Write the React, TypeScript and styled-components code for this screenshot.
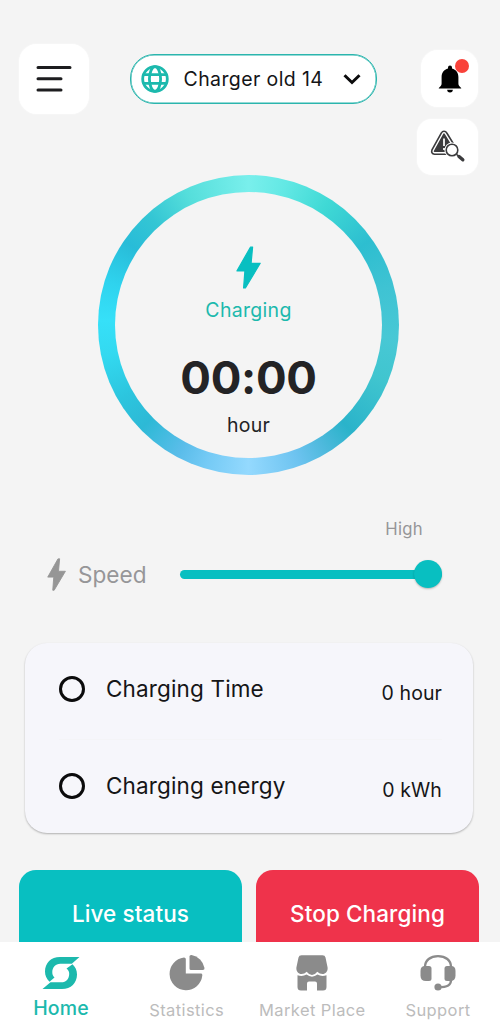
import React from "react";
import styled, { createGlobalStyle } from "styled-components";

const teal = "#08bfc1";
const tealText = "#1cb9ad";

const GlobalStyle = createGlobalStyle`
  * { box-sizing: border-box; }
  body { margin: 0; background: #f4f4f4; font-family: Inter, "Liberation Sans", sans-serif; }
  button { font: inherit; border: 0; padding: 0; cursor: pointer; }
`;

const Screen = styled.div`
  width: 500px;
  height: 1024px;
  overflow: hidden;
  display: flex;
  flex-direction: column;
  background: #f4f4f4;
`;

const Header = styled.header`
  flex: none;
  height: 175px;
  display: flex;
  justify-content: space-between;
  align-items: flex-start;
  padding: 44px 22px 0 19px;
`;

const Tile = styled.button<{ $w: number; $h: number; $r: number }>`
  position: relative;
  width: ${(p) => p.$w}px;
  height: ${(p) => p.$h}px;
  border-radius: ${(p) => p.$r}px;
  background: #fff;
  box-shadow: 0 0 2px rgba(255, 255, 255, 0.9);
  display: flex;
  align-items: center;
  justify-content: center;
`;

const DiagnosticsTile = styled(Tile)`
  padding-bottom: 3px;
`;

const Picker = styled.button`
  width: 247px;
  height: 50px;
  margin: 10px 0 0;
  padding: 0 15px 0 10px;
  border: 1px solid #2bb5ad;
  box-shadow: inset 0 0 0 0.5px #2bb5ad;
  border-radius: 24px;
  background: #fff;
  display: flex;
  align-items: center;
`;

const Label = styled.span<{
  $size: number;
  $line?: number;
  $color?: string;
  $weight?: number;
  $track?: number;
}>`
  font-size: ${(p) => p.$size}px;
  line-height: ${(p) => p.$line ?? 24}px;
  color: ${(p) => p.$color ?? "#151517"};
  font-weight: ${(p) => p.$weight ?? 400};
  letter-spacing: ${(p) => p.$track ?? 0}px;
  white-space: nowrap;
`;

const PickerLabel = styled(Label)`
  flex: 1;
  text-align: left;
  padding-left: 15px;
`;

const Alerts = styled.div`
  display: flex;
  flex-direction: column;
  align-items: flex-end;
  gap: 12px;
  padding-top: 6px;
`;

const Badge = styled.i`
  position: absolute;
  top: 9px;
  right: 9px;
  width: 14px;
  height: 14px;
  border-radius: 50%;
  background: #f9423a;
`;

const Ring = styled.section`
  flex: none;
  width: 301px;
  height: 300px;
  margin-left: 98px;
  padding: 17px;
  border-radius: 50%;
  background: conic-gradient(
    #79efec 0deg, #62e8e4 15deg, #3fd9d5 33deg, #2dbed0 55deg, #3fc3d3 75deg,
    #48c8d5 95deg, #40c5cf 112deg, #2ab3ca 136deg, #4db9dc 148deg, #6dc3f0 160deg,
    #94d9fe 180deg, #74caf5 197deg, #5bbdea 208deg, #2db9d6 226deg, #2cc5de 240deg,
    #33d9f0 258deg, #36e0f8 272deg, #2fd3ee 287deg, #28bcd8 304deg, #34c6d4 318deg,
    #55dedb 335deg, #79efec 360deg
  );
`;

const Dial = styled.div`
  height: 100%;
  border-radius: 50%;
  background: #f4f4f4;
  display: flex;
  flex-direction: column;
  align-items: center;
  padding-top: 54px;
`;

const Clock = styled(Label)`
  margin: 28px 0 9px;
`;

const SpeedSection = styled.section`
  flex: none;
  height: 168px;
  padding: 42px 58px 0 47px;
`;

const SpeedHint = styled.div`
  display: flex;
  justify-content: flex-end;
  padding-right: 19px;
`;

const SpeedRow = styled.div`
  display: flex;
  align-items: center;
  height: 34px;
  margin-top: 16px;
`;

const SpeedLabel = styled(Label)`
  width: 102px;
  margin-left: 12px;
  padding-top: 1px;
`;

const Track = styled.div`
  flex: 1;
  height: 9px;
  border-radius: 5px;
  background: ${teal};
  display: flex;
  align-items: center;
  justify-content: flex-end;
`;

const Thumb = styled.div`
  width: 28px;
  height: 28px;
  border-radius: 50%;
  background: ${teal};
  box-shadow: 0 1px 2px rgba(0, 0, 0, 0.25);
`;

const Card = styled.section`
  flex: none;
  margin: 0 27px 0 25px;
  height: 190px;
  border-radius: 22px;
  background: #f6f6fb;
  box-shadow: 0 1px 2px rgba(0, 0, 0, 0.28);
  padding: 0 31px 0 34px;
`;

const Metric = styled.div`
  display: flex;
  align-items: center;
  height: 96px;
  padding-bottom: 4px;
  & + & {
    border-top: 1px solid #f4f4f7;
  }
`;

const Circle = styled.i`
  width: 26px;
  height: 26px;
  border: 3px solid #0b0b0c;
  border-radius: 50%;
`;

const MetricName = styled(Label)`
  flex: 1;
  margin-left: 21px;
`;

const MetricValue = styled(Label)`
  padding-top: 8px;
`;

const Actions = styled.section`
  flex: none;
  height: 109px;
  padding: 37px 21px 0 19px;
  display: flex;
  gap: 14px;
  overflow: hidden;
`;

const Action = styled.button<{ $bg: string }>`
  flex: 1;
  height: 88px;
  border-radius: 17px;
  background: ${(p) => p.$bg};
`;

const Nav = styled.nav`
  flex: none;
  height: 82px;
  background: #fff;
  display: grid;
  grid-template-columns: repeat(4, 125.7px);
  justify-content: center;
  padding-right: 1px;
`;

const NavItem = styled.a<{ $active?: boolean }>`
  display: flex;
  flex-direction: column;
  align-items: center;
  padding-top: 12px;
  gap: ${(p) => (p.$active ? 4 : 6)}px;
`;

const Bolt = ({ w, h, color }: { w: number; h: number; color: string }) => (
  <svg width={w} height={h} viewBox="0 0 25 43" preserveAspectRatio="none">
    <path
      d="M14.4 1.2 1 24.9H8.9L7.6 42H9.4L24.2 17.3H15.1L16.6 1Z"
      fill={color}
      stroke={color}
      strokeWidth="1.2"
      strokeLinejoin="round"
    />
  </svg>
);

const MenuIcon = () => (
  <svg width="36" height="28" viewBox="0 0 36 28" stroke="#1d1d1f" strokeWidth="3" strokeLinecap="round">
    <path d="M2 2.500H34M2 13.700H25M2 25H25" />
  </svg>
);

const GlobeIcon = () => (
  <svg width="28" height="28" viewBox="0 0 28 28" fill="none" stroke={tealText} strokeWidth="2.800">
    <circle cx="14" cy="14" r="12.300" />
    <ellipse cx="14" cy="14" rx="5.600" ry="12.300" />
    <path d="M2.500 9.600H25.500M2.500 18.400H25.500" />
  </svg>
);

const ChevronIcon = () => (
  <svg width="18" height="12" viewBox="0 0 18 12" fill="none" stroke="#0b0b0c" strokeWidth="3">
    <path d="M1.500 2.200 9 9.500 16.500 2.200" />
  </svg>
);

const BellIcon = () => (
  <svg width="26" height="28" viewBox="0 0 26 28" fill="#000">
    <path d="M13 0.500a2 2 0 0 1 2 2v.9c4 1 6.400 4.300 6.400 8.600v6.600c0 1.700.9 3 2.800 4.400v.6H1.800v-.6c1.900-1.400 2.800-2.700 2.800-4.400V12c0-4.300 2.400-7.600 6.400-8.600v-.9a2 2 0 0 1 2-2Z" />
    <path d="M10.200 24.800h5.600a2.800 2.600 0 0 1-5.600 0Z" />
  </svg>
);

const WarningSearchIcon = () => (
  <svg width="36" height="34" viewBox="0 0 36 34">
    <path
      d="M14 2.200Q15.800 2.200 16.800 4L27 20.600Q28.500 25 25 25.200H4.500Q.8 24.800 2 20.800L11.400 4Q12.300 2.200 14 2.200Z"
      fill="#fff"
      stroke="#3b3b3d"
      strokeWidth="1.600"
    />
    <path d="M14 5.200 24.500 22.300H4.500Z" fill="#3b3b3d" stroke="#3b3b3d" strokeWidth="1.600" strokeLinejoin="round" />
    <path d="M14 9.500V17M14 19v2" stroke="#e6e6e6" strokeWidth="2" />
    <circle cx="22" cy="21" r="7.600" fill="#fff" />
    <circle cx="22" cy="21" r="5.800" fill="#fff" stroke="#3b3b3d" strokeWidth="1.600" />
    <path d="m26.500 25.200 2.500 2.500" stroke="#3b3b3d" strokeWidth="1.600" />
    <path d="m29 27.500 3.800 3.300" stroke="#3b3b3d" strokeWidth="3.400" strokeLinecap="round" />
  </svg>
);

const HomeIcon = () => (
  <svg width="38" height="38" viewBox="0 0 38 38" fill={tealText}>
    <path d="M37.500 3H18C9 3 3 9 3 17.500c0 4.300 1.600 7.300 4.500 10.200l5-4.200c-1.700-1.700-2.200-3-2.200-5.200 0-5 3-8.600 8-8.600h11.500Z" />
    <path d="M.500 35H20C29 35 35 29 35 20.500c0-4.300-1.600-7.300-4.500-10.200l-6 4.200c2 1.700 2.700 3 2.700 5.200 0 5-3 8.600-8 8.600H8.500Z" />
  </svg>
);

const StatsIcon = () => (
  <svg width="36" height="38" viewBox="0 0 36 38" fill="#8b8b8b">
    <path d="M15 3.500Q16.800 3.500 16.800 5V19.600H31.800Q33.600 19.600 33.300 21.500A16.400 16.400 0 1 1 15 3.500Z" />
    <path d="M20.500 2.500Q20.500.8 22.500 1A16 16 0 0 1 35.500 14Q35.700 16 33.800 16H22Q20.500 16 20.500 14.500Z" />
  </svg>
);

const StoreIcon = () => (
  <svg width="32" height="38" viewBox="0 0 32 38" fill="#8b8b8b">
    <path d="M5.500 1.200H26.500Q29 1.200 29.500 3.500L31.600 13.500C32 17.500 29.500 20 26.500 20Q23.500 20 21.300 17.800 19 21 16 21T10.700 17.800Q8.500 20 5.500 20C2.500 20 0 17.500.4 13.500L2.500 3.500Q3 1.200 5.500 1.200Z" />
    <path d="M1.500 21.300Q6.500 23 10.500 20.600 16 24.800 21.500 20.600 25.500 23 30.500 21.300V33Q30.500 36.500 27 36.500H21V29.500Q21 27.500 19 27.500H13Q11 27.500 11 29.500V36.500H5Q1.500 36.500 1.500 33Z" />
  </svg>
);

const SupportIcon = () => (
  <svg width="36" height="38" viewBox="0 0 36 38" fill="none" stroke="#8b8b8b" strokeWidth="2.300">
    <path d="M5 13C5 6 10.500 2.200 18 2.200S31 6 31 13" />
    <path d="M31 26C31 31 28 33.200 18 33.200" />
    <g fill="#8b8b8b" stroke="none">
      <path d="M5 12H9Q11.500 12 11.500 14.500V24.500Q11.500 27 9 27H6Q.5 27 .5 21.500V17Q.5 12 5 12Z" />
      <path d="M31 12H27Q24.500 12 24.500 14.500V24.500Q24.500 27 27 27H30Q35.500 27 35.500 21.500V17Q35.500 12 31 12Z" />
      <circle cx="18" cy="33" r="3.600" />
    </g>
  </svg>
);

const tabs = [
  { name: "Home", Icon: HomeIcon, active: true },
  { name: "Statistics", Icon: StatsIcon },
  { name: "Market Place", Icon: StoreIcon },
  { name: "Support", Icon: SupportIcon },
];

const metrics = [
  { name: "Charging Time", value: "0 hour" },
  { name: "Charging energy", value: "0 kWh" },
];

export default function App() {
  return (
    <Screen>
      <GlobalStyle />
      <Header>
        <Tile $w={70} $h={70} $r={18} aria-label="Menu">
          <MenuIcon />
        </Tile>
        <Picker>
          <GlobeIcon />
          <PickerLabel $size={19.5} $track={0.4}>Charger old 14</PickerLabel>
          <ChevronIcon />
        </Picker>
        <Alerts>
          <Tile $w={57} $h={57} $r={17} aria-label="Notifications">
            <BellIcon />
            <Badge />
          </Tile>
          <DiagnosticsTile $w={61} $h={56} $r={15} aria-label="Diagnostics">
            <WarningSearchIcon />
          </DiagnosticsTile>
        </Alerts>
      </Header>

      <Ring>
        <Dial>
          <Bolt w={25} h={43} color={teal} />
          <Label $size={19.5} $line={43} $track={0.3} $color={tealText}>Charging</Label>
          <Clock $size={45.5} $line={36} $weight={700} $track={-0.3} $color="#232325">00:00</Clock>
          <Label $size={19.5} $line={40} $track={0.2} $color="#232325">hour</Label>
        </Dial>
      </Ring>

      <SpeedSection>
        <SpeedHint>
          <Label $size={16.7} $track={0.3} $color="#969698">High</Label>
        </SpeedHint>
        <SpeedRow>
          <Bolt w={19} h={33} color="#969696" />
          <SpeedLabel $size={22.6} $color="#969698">Speed</SpeedLabel>
          <Track>
            <Thumb />
          </Track>
        </SpeedRow>
      </SpeedSection>

      <Card>
        {metrics.map((m) => (
          <Metric key={m.name}>
            <Circle />
            <MetricName $size={22.5} $track={0.15}>{m.name}</MetricName>
            <MetricValue $size={19.5} $track={0.1}>{m.value}</MetricValue>
          </Metric>
        ))}
      </Card>

      <Actions>
        <Action $bg={teal}>
          <Label $size={22.5} $weight={500} $track={0.1} $color="#fff">Live status</Label>
        </Action>
        <Action $bg="#ef334b">
          <Label $size={22.5} $weight={500} $track={0.1} $color="#fff">Stop Charging</Label>
        </Action>
      </Actions>

      <Nav>
        {tabs.map(({ name, Icon, active }) => (
          <NavItem key={name} $active={active}>
            <Icon />
            <Label
              $size={active ? 19.5 : 16.5}
              $weight={active ? 500 : 400}
              $track={active ? 0.1 : 0.4}
              $color={active ? tealText : "#bcbcbc"}
            >
              {name}
            </Label>
          </NavItem>
        ))}
      </Nav>
    </Screen>
  );
}
